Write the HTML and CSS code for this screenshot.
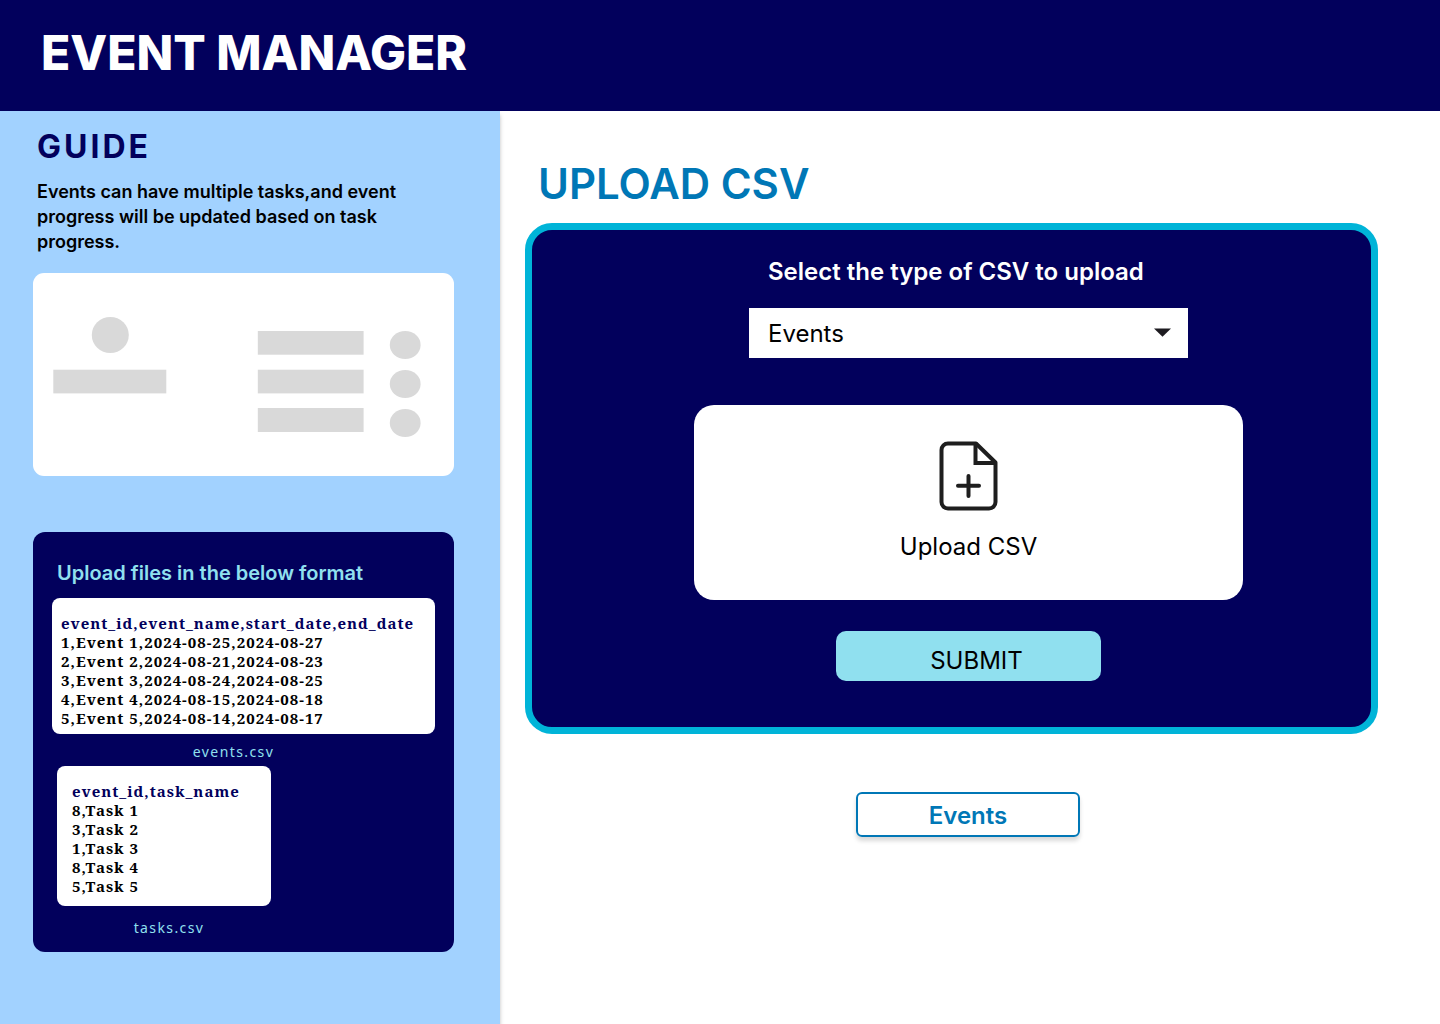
FILE: index.html
```html
<!DOCTYPE html>
<html lang="en">
<head>
  <meta charset="utf-8">
  <meta name="viewport" content="width=device-width, initial-scale=1">
  <title>Event Manager</title>
  <link rel="stylesheet" href="styles.css">
</head>
<body>
  <header class="site-header">
    <h1 class="site-title">EVENT MANAGER</h1>
  </header>
  <div class="layout">
    <aside class="guide">
      <h2 class="guide-title">GUIDE</h2>
      <p class="guide-text">Events can have multiple tasks,and event progress will be updated based on task progress.</p>
      <div class="preview">
        <svg class="preview-art" viewBox="0 0 421 203" fill="#d9d9d9" aria-hidden="true">
          <ellipse cx="77.3" cy="62" rx="18.5" ry="18"/>
          <rect x="20.3" y="96.7" width="113" height="23.7"/>
          <rect x="224.8" y="58" width="105.8" height="23.7"/>
          <rect x="224.8" y="96.7" width="105.8" height="23.7"/>
          <rect x="224.8" y="135" width="105.8" height="24"/>
          <ellipse cx="372.2" cy="72" rx="15.4" ry="14"/>
          <ellipse cx="372.2" cy="111" rx="15.4" ry="14"/>
          <ellipse cx="372.2" cy="150" rx="15.4" ry="14"/>
        </svg>
      </div>
      <section class="formats">
        <h3 class="formats-title">Upload files in the below format</h3>
        <figure class="sample sample-events">
          <pre class="csv"><span class="csv-head">event_id,event_name,start_date,end_date</span>
1,Event 1,2024-08-25,2024-08-27
2,Event 2,2024-08-21,2024-08-23
3,Event 3,2024-08-24,2024-08-25
4,Event 4,2024-08-15,2024-08-18
5,Event 5,2024-08-14,2024-08-17</pre>
          <figcaption class="caption">events.csv</figcaption>
        </figure>
        <figure class="sample sample-tasks">
          <pre class="csv"><span class="csv-head">event_id,task_name</span>
8,Task 1
3,Task 2
1,Task 3
8,Task 4
5,Task 5</pre>
          <figcaption class="caption">tasks.csv</figcaption>
        </figure>
      </section>
    </aside>
    <main class="content">
      <h2 class="content-title">UPLOAD CSV</h2>
      <form class="upload-form">
        <div class="field">
          <label class="field-label" for="csv-type">Select the type of CSV to upload</label>
          <div class="select-wrap">
            <select class="select" id="csv-type">
              <option>Events</option>
              <option>Tasks</option>
            </select>
            <svg class="select-arrow" width="17" height="9" viewBox="0 0 17 9" aria-hidden="true"><path d="M0 .4h17L8.500 8.700z" fill="#1d1b20"/></svg>
          </div>
        </div>
        <label class="dropzone">
          <input class="file-input" type="file" accept=".csv">
          <svg width="60" height="70" viewBox="0 0 60 70" fill="none" stroke="#1e1e1e" stroke-width="4" stroke-linejoin="round" stroke-linecap="round" aria-hidden="true">
            <path d="M37 2.500H9A6.500 6.500 0 0 0 2.500 9v52A6.500 6.500 0 0 0 9 67.500h41a6.500 6.500 0 0 0 6.500-6.500V21.500z"/>
            <path d="M36.500 3v19H56" stroke-linejoin="miter"/>
            <path d="M29.500 35v20M19 44.700h21"/>
          </svg>
          <span>Upload CSV</span>
        </label>
        <button class="submit" type="submit">SUBMIT</button>
      </form>
      <a class="events-link" href="#events">Events</a>
    </main>
  </div>
</body>
</html>
```
FILE: styles.css
```css
:root {
  --navy: #02005c;
  --blue: #0077b6;
  --cyan: #00b4d8;
  --aqua: #90e0ef;
  --sky: #a2d2ff;
}

* {
  box-sizing: border-box;
}

body {
  display: flex;
  flex-direction: column;
  min-height: 100vh;
  margin: 0;
  background: #fff;
  color: #000;
  font-family: Inter, "Liberation Sans", sans-serif;
}

h1, h2, h3, p, pre, figure {
  margin: 0;
}

.site-header {
  padding: 23px 41px 28px;
  background: var(--navy);
}

.site-title {
  color: #fff;
  font-size: 48px;
  font-weight: 800;
  line-height: 60px;
}

.layout {
  display: flex;
  flex: 1;
}

.guide {
  flex: 0 0 500px;
  padding: 16px 46px 72px 33px;
  background: var(--sky);
  box-shadow: 0 4px 4px rgba(0, 0, 0, 0.25);
}

.guide-title {
  padding-left: 4px;
  color: var(--navy);
  font-size: 32px;
  font-weight: 700;
  letter-spacing: 3px;
  line-height: 40px;
}

.guide-text {
  margin: 12px 0 19px;
  padding: 0 40px 0 4px;
  font-size: 18px;
  font-weight: 600;
  line-height: 25px;
}

.preview {
  border-radius: 11px;
  background: #fff;
}

.preview-art {
  display: block;
  width: 100%;
}

.formats {
  margin-top: 56px;
  padding: 29px 19px 15px;
  border-radius: 12px;
  background: var(--navy);
  color: var(--aqua);
}

.formats-title {
  margin-bottom: 13px;
  padding-left: 5px;
  font-size: 20px;
  font-weight: 600;
  line-height: 24px;
}

.csv {
  padding: 16px 9px 6px;
  border-radius: 8px;
  background: #fff;
  color: #000;
  font-family: "Noto Serif", "Droid Serif", "Liberation Serif", serif;
  font-size: 15px;
  font-weight: 700;
  letter-spacing: 1px;
  line-height: 19px;
}

.csv-head {
  color: var(--navy);
}

.caption {
  margin-top: 8px;
  font-family: "Noto Sans", sans-serif;
  font-size: 14px;
  letter-spacing: 0.1em;
  line-height: 19px;
  text-align: center;
}

.sample-events .caption {
  padding-right: 20px;
}

.sample-tasks {
  width: 214px;
  margin: 5px 0 0 5px;
}

.sample-tasks .csv {
  padding: 16px 15px 10px;
}

.sample-tasks .caption {
  margin-top: 12px;
  padding-left: 10px;
}

.content {
  display: flex;
  flex: 1;
  flex-direction: column;
  padding: 47px 62px 40px 25px;
}

.content-title {
  margin-bottom: 13px;
  padding-left: 13px;
  color: var(--blue);
  font-size: 42px;
  font-weight: 600;
  line-height: 52px;
}

.upload-form {
  display: flex;
  flex-direction: column;
  align-items: center;
  padding: 27px 0 46px 34px;
  border: 7px solid var(--cyan);
  border-radius: 27px;
  background: var(--navy);
  font-size: 24px;
  line-height: 30px;
}

.field {
  width: 439px;
}

.field-label {
  display: block;
  margin-bottom: 21px;
  padding-left: 19px;
  color: #fff;
  font-weight: 600;
}

.select-wrap {
  position: relative;
}

.select {
  display: block;
  width: 100%;
  height: 50px;
  padding: 2px 19px 0;
  border: 0;
  border-radius: 0;
  appearance: none;
  background: #fff;
  color: #000;
  font: inherit;
}

.select-arrow {
  position: absolute;
  top: 20px;
  right: 17px;
  pointer-events: none;
}

.dropzone {
  position: relative;
  display: flex;
  flex-direction: column;
  align-items: center;
  gap: 21px;
  width: 549px;
  margin: 47px 0 31px;
  padding: 36px 0 38px;
  border-radius: 20px;
  background: #fff;
  cursor: pointer;
}

.file-input {
  position: absolute;
  inset: 0;
  width: 100%;
  opacity: 0;
}

.submit {
  width: 265px;
  height: 50px;
  padding: 10px 0 0 16px;
  border: 0;
  border-radius: 10px;
  background: var(--aqua);
  color: #000;
  font: inherit;
}

.events-link {
  align-self: center;
  width: 224px;
  margin: 58px 0 0 33px;
  padding: 7px 0 4px;
  border: 2px solid var(--blue);
  border-radius: 6px;
  box-shadow: 0 4px 4px rgba(0, 0, 0, 0.15);
  color: var(--blue);
  font-size: 24px;
  font-weight: 600;
  line-height: 30px;
  text-align: center;
  text-decoration: none;
}
```
